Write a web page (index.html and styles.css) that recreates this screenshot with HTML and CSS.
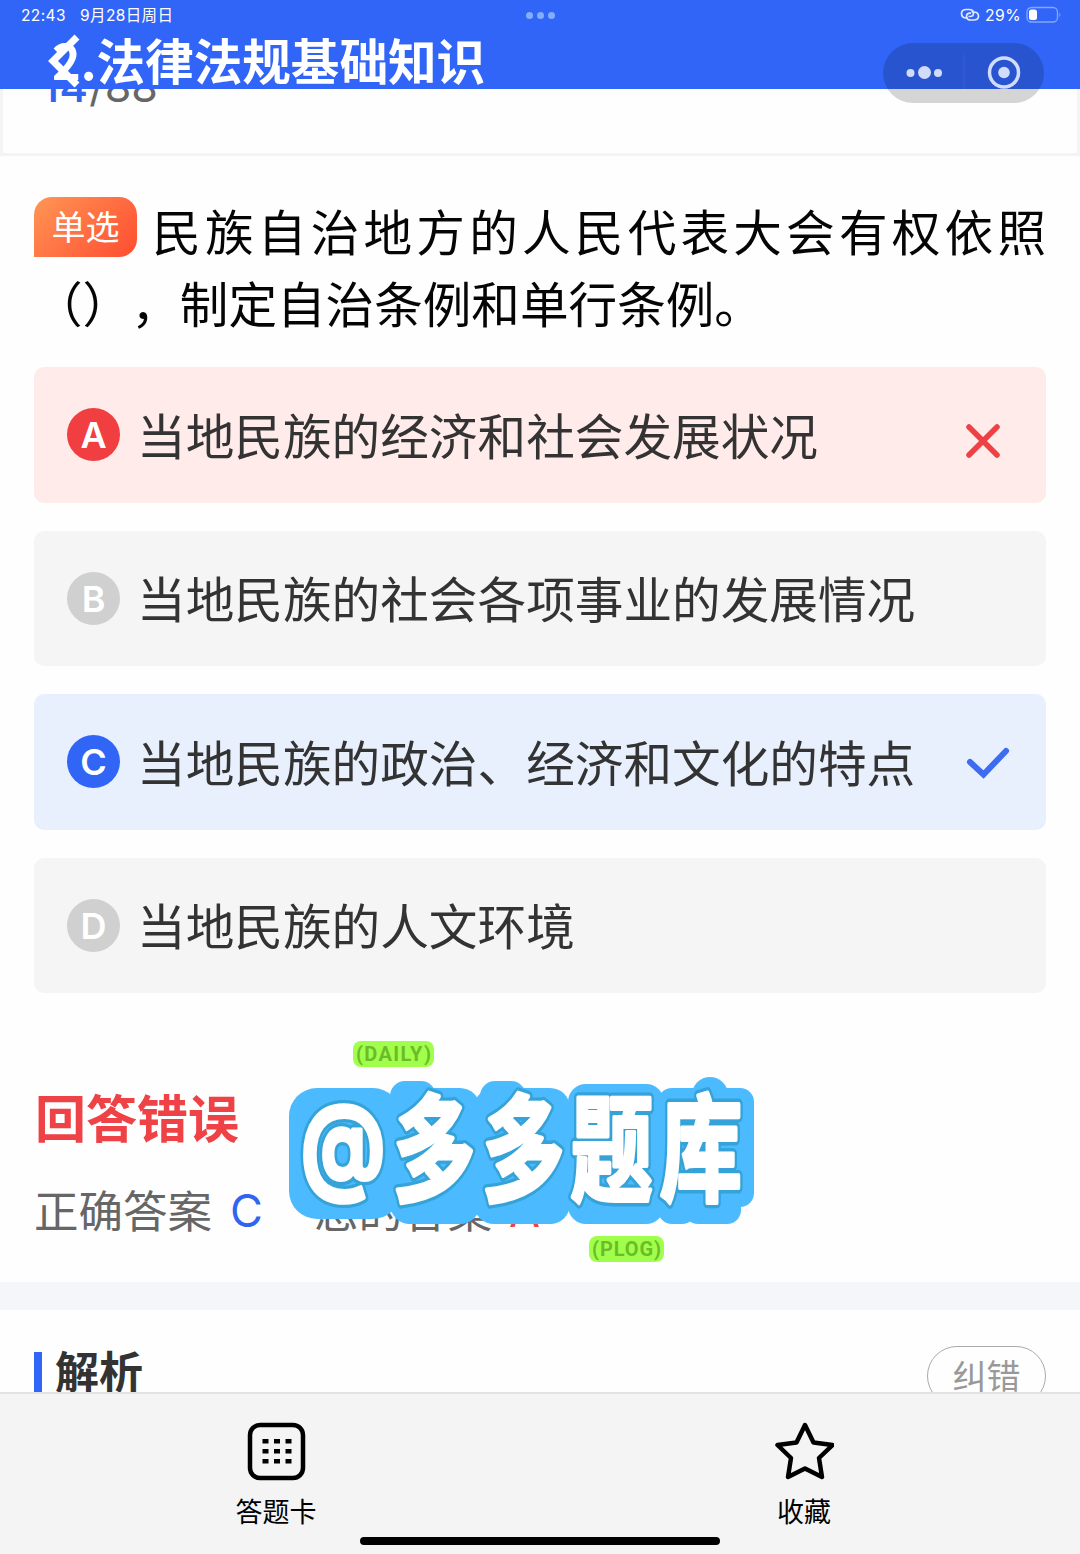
FILE: index.html
```html
<!DOCTYPE html>
<html lang="zh-CN">
<head>
<meta charset="utf-8">
<title>法律法规基础知识</title>
<link rel="stylesheet" href="styles.css">
</head>
<body>
<header class="header">
  <div class="status">
    <span class="status-time">22:43</span>
    <span class="status-date">9月28日周日</span>
    <span class="multitask"><i></i><i></i><i></i></span>
    <svg class="link-icon" width="20" height="14" viewBox="0 0 20 14"><path d="M8 10H6.500C3.500 10 1.500 8.500 1.500 5.500S3.500 1.500 6.500 1.500H9C12 1.500 13.500 3 13.500 5S12 8.500 10 8.500H8.500M11.500 4H13.500C16.500 4 18.500 5.500 18.500 8.200S16.500 12 13.500 12H11C8 12 6.500 10.800 6.500 8.700S8 5.200 10 5.200H11"/></svg>
    <span class="battery-text">29%</span>
    <svg class="battery" width="36" height="18" viewBox="0 0 36 18"><rect class="shell" x="1" y="1.500" width="30.500" height="14.500" rx="4.500"/><rect class="level" x="3" y="3.500" width="8" height="10.500" rx="2.500"/><path class="tip" d="M33.500 6.500q2 2.250 0 4.500z"/></svg>
  </div>
  <h1 class="title">2.法律法规基础知识</h1>
  <svg class="back" width="34" height="56" viewBox="0 0 34 56"><path d="M30 4 6 28l24 24"/></svg>
  <div class="capsule">
    <svg width="160" height="60" viewBox="0 0 160 60"><path class="sep" d="M81 12v34"/><g class="mark"><circle cx="27.500" cy="30" r="4"/><circle cx="41.500" cy="29.500" r="6.500"/><circle cx="55" cy="30" r="4"/><circle cx="121" cy="29.500" r="5.800"/></g><circle class="ring" cx="121" cy="29.500" r="14.500"/></svg>
  </div>
</header>

<main class="content">
  <div class="progress"><span class="now">14</span><span class="total">/88</span></div>

  <section class="quiz">
    <p class="question"><span class="tag">单选</span>民族自治地方的人民代表大会有权依照（），制定自治条例和单行条例。</p>
    <ul class="options">
      <li class="option wrong"><span class="letter">A</span><span class="text">当地民族的经济和社会发展状况</span><svg class="cross" width="36" height="36" viewBox="0 0 36 36"><path d="m4 4 28 28M32 4 4 32"/></svg></li>
      <li class="option"><span class="letter">B</span><span class="text">当地民族的社会各项事业的发展情况</span></li>
      <li class="option right"><span class="letter">C</span><span class="text">当地民族的政治、经济和文化的特点</span><svg class="check" width="44" height="32" viewBox="0 0 44 32"><path d="m4 15 13.500 12.500L40 4"/></svg></li>
      <li class="option"><span class="letter">D</span><span class="text">当地民族的人文环境</span></li>
    </ul>
  </section>

  <section class="result">
    <h2 class="verdict">回答错误</h2>
    <div class="answers">
      <span>正确答案</span><b class="good">C</b><span class="yours">您的答案</span><b class="bad">A</b>
    </div>
    <svg class="sticker" width="480" height="240" viewBox="0 0 480 240">
      <defs>
        <g id="word">
          <text class="at" transform="translate(17 154) scale(.94 1.190)">@</text>
          <text class="han" transform="translate(0 165) scale(.85 1.200)" x="128 233 337 442">多多题库</text>
        </g>
      </defs>
      <g class="backing">
        <rect x="5" y="61" width="112" height="131" rx="28"/>
        <rect x="106" y="54" width="46" height="80" rx="15"/>
        <rect x="106" y="61" width="90" height="136" rx="20"/>
        <rect x="196" y="54" width="46" height="80" rx="15"/>
        <rect x="190" y="61" width="96" height="136" rx="20"/>
        <rect x="284" y="57" width="96" height="140" rx="18"/>
        <circle cx="426" cy="68" r="18"/>
        <rect x="374" y="61" width="96" height="119" rx="14"/>
        <rect x="374" y="100" width="38" height="97" rx="14"/>
        <rect x="400" y="130" width="57" height="67" rx="14"/>
      </g>
      <use href="#word" class="edge"/>
      <use href="#word" class="face"/>
      <g class="pill">
        <rect x="69" y="14" width="81" height="26" rx="8"/>
        <rect x="305" y="209" width="75" height="26" rx="8"/>
      </g>
      <text class="label" x="72" y="34" textLength="75" lengthAdjust="spacing">(DAILY)</text>
      <text class="label" x="308" y="229" textLength="69" lengthAdjust="spacing">(PLOG)</text>
    </svg>
  </section>

  <section class="analysis">
    <h2 class="heading"><span>解析</span></h2>
    <button class="report">纠错</button>
  </section>
</main>

<footer class="footer">
  <div class="action">
    <svg width="60" height="60" viewBox="0 0 60 60"><rect class="line" x="4" y="4" width="53" height="53" rx="10"/><path d="M16.500 18h6v4.500h-6zM28 18h6v4.500h-6zM39.500 18h6v4.500h-6zM16.500 28h6v4.500h-6zM28 28h6v4.500h-6zM39.500 28h6v4.500h-6zM16.500 38h6v4.500h-6zM28 38h6v4.500h-6zM39.500 38h6v4.500h-6z"/></svg>
    <span>答题卡</span>
  </div>
  <div class="action">
    <svg width="60" height="60" viewBox="0 0 60 60"><path class="line" d="M31 4 39.500 21.500 58.500 24 45 37 48 56 31 47.500 14 56 17 37 3.500 24 22.500 21.500Z"/></svg>
    <span>收藏</span>
  </div>
  <i class="home"></i>
</footer>
</body>
</html>
```
FILE: styles.css
```css
* { box-sizing: border-box; }
body {
  margin: 0;
  height: 1554px;
  display: flex;
  flex-direction: column;
  overflow: hidden;
  background: #fefefe;
  color: #333;
  font-family: Inter, "Noto Sans CJK SC", sans-serif;
}
h1, h2, p, ul { margin: 0; padding: 0; }

.header {
  position: relative;
  z-index: 2;
  height: 89px;
  flex: none;
  background: #3165f8;
  color: #fff;
}
.status {
  display: flex;
  align-items: center;
  height: 30px;
  padding: 0 18px 0 21px;
  font-size: 15.500px;
  letter-spacing: .4px;
}
.status-date { margin: -3px 0 0 14px; font-size: 15.500px; }
.multitask {
  position: absolute;
  left: 526px;
  top: 12px;
  display: flex;
  gap: 4px;
}
.multitask i { width: 7px; height: 7px; border-radius: 50%; background: #83adff; }
.link-icon { margin-left: auto; fill: none; stroke: #dfe8ff; stroke-width: 1.700; }
.battery-text { margin: 0 5px 0 5px; font-size: 15.700px; }
.shell { fill: none; stroke: #86a7fc; stroke-width: 1.300; }
.level { fill: #fff; }
.tip { fill: #86a7fc; }
.title {
  padding-left: 52px;
  font: 700 48.600px/58px "Noto Sans CJK SC", sans-serif;
}
.back {
  position: absolute;
  left: 47px;
  top: 33px;
  fill: none;
  stroke: #fff;
  stroke-width: 7;
}
.capsule {
  position: absolute;
  left: 883px;
  top: 43px;
  width: 161px;
  height: 60px;
  border-radius: 30px;
  background: rgba(0, 0, 0, .16);
}
.mark { fill: #d1dcfb; }
.ring { fill: none; stroke: #d1dcfb; stroke-width: 3.500; }
.sep { stroke: #3c60cf; }

.content { flex: 1; min-height: 0; overflow: hidden; }
.progress {
  display: flex;
  align-items: baseline;
  height: 67px;
  padding-left: 38px;
  border: 3px solid #f4f4f4;
  border-top: 0;
  line-height: 0;
}
.progress span { margin-top: -3px; }
.now { color: #3165ef; font-size: 44px; font-weight: 500; }
.total { color: #666; font-size: 43px; margin-left: 1px; }

.quiz { padding: 38px 34px 0; }
.question {
  color: #050505;
  font: 400 48.600px/72px "Noto Sans CJK SC", sans-serif;
  text-align: justify;
  text-spacing-trim: space-all;
}
.tag {
  display: inline-block;
  height: 60px;
  width: 103px;
  margin-top: 3px;
  margin-right: 11px;
  border-radius: 18px 18px 18px 0;
  background: linear-gradient(135deg, #ff9655, #ff4c31);
  color: #fff;
  font-size: 34px;
  line-height: 58px;
  text-align-last: center;
  vertical-align: top;
}
.options { display: grid; gap: 28px; margin-top: 29px; list-style: none; }
.option {
  display: flex;
  align-items: center;
  height: 135.500px;
  padding: 0 36px 0 33px;
  border-radius: 10px;
  background: #f5f5f5;
}
.letter {
  width: 53px;
  height: 53px;
  margin-right: 17px;
  border-radius: 50%;
  background: #d0d0d0;
  color: #fff;
  font-size: 36px;
  font-weight: 600;
  line-height: 54px;
  text-align: center;
}
.text { padding-bottom: 2px; font: 400 48.650px/72px "Noto Sans CJK SC", sans-serif; }
.wrong { background: #feebea; }
.wrong .letter { background: #f03e41; }
.right { background: #e8effd; }
.right .letter { background: #3165f5; }
.cross, .check { margin-left: auto; fill: none; stroke-width: 5.500; stroke-linecap: round; }
.cross { margin-right: 9px; margin-top: 13px; stroke: #ee4145; }
.check { margin-top: 2px; stroke: #3b6cf1; stroke-width: 6; }

.result {
  position: relative;
  height: 289px;
  padding: 88px 34px 0;
}
.verdict { padding-left: 1px; color: #ef4246; font: 700 51px/70px "Noto Sans CJK SC", sans-serif; }
.answers {
  display: flex;
  align-items: center;
  height: 60px;
  margin-top: 28px;
  color: #666;
  font: 400 44.500px/60px "Noto Sans CJK SC", sans-serif;
}
.answers b { padding-top: 3px; font: 400 45px/60px Inter, sans-serif; }
.good { margin-left: 18px; color: #3165ef; }
.bad { margin-left: 17px; color: #ef4246; }
.yours { margin-left: 51px; }
.sticker { position: absolute; left: 284px; top: 34px; overflow: visible; }
.at { font: 700 88px Inter, sans-serif; }
.han { font: 700 97px "Noto Sans CJK SC", sans-serif; }
.edge, .face { stroke-linejoin: round; }
.backing { fill: #4bbaff; }
.edge { fill: #35a2d8; stroke: #35a2d8; stroke-width: 9; }
.face { fill: #fff; stroke: #fff; stroke-width: 3.500; }
.pill { fill: #a0ff4b; }
.label { font: 700 20px Roboto, sans-serif; fill: #6dbb2a; }

.analysis {
  display: flex;
  justify-content: space-between;
  align-items: flex-start;
  padding: 36px 34px 0;
  border-top: 28px solid #f3f7fa;
}
.heading {
  display: flex;
  align-items: flex-start;
  gap: 13px;
  font: 700 44px/48px "Noto Sans CJK SC", sans-serif;
}
.heading::before { content: ""; width: 8px; height: 42px; margin-top: 6px; background: #3165f5; }
.report {
  width: 119px;
  height: 60px;
  padding: 0 0 3px;
  border: 1.500px solid #aaa;
  border-radius: 30px;
  background: none;
  color: #999;
  font: 400 34px/54px "Noto Sans CJK SC", sans-serif;
}

.footer {
  position: relative;
  flex: none;
  display: grid;
  grid-template-columns: 1fr 1fr;
  height: 162px;
  padding: 27px 12px 0;
  border-top: 2px solid #e2e2e2;
  background: #f4f4f4;
}
.action {
  display: flex;
  flex-direction: column;
  align-items: center;
  gap: 10px;
  color: #000;
  font: 400 27px/40px "Noto Sans CJK SC", sans-serif;
}
.line { fill: none; stroke: #000; stroke-width: 4.500; stroke-linejoin: round; }
.home {
  position: absolute;
  left: 360px;
  bottom: 9px;
  width: 360px;
  height: 8px;
  border-radius: 4px;
  background: #000;
}
```
